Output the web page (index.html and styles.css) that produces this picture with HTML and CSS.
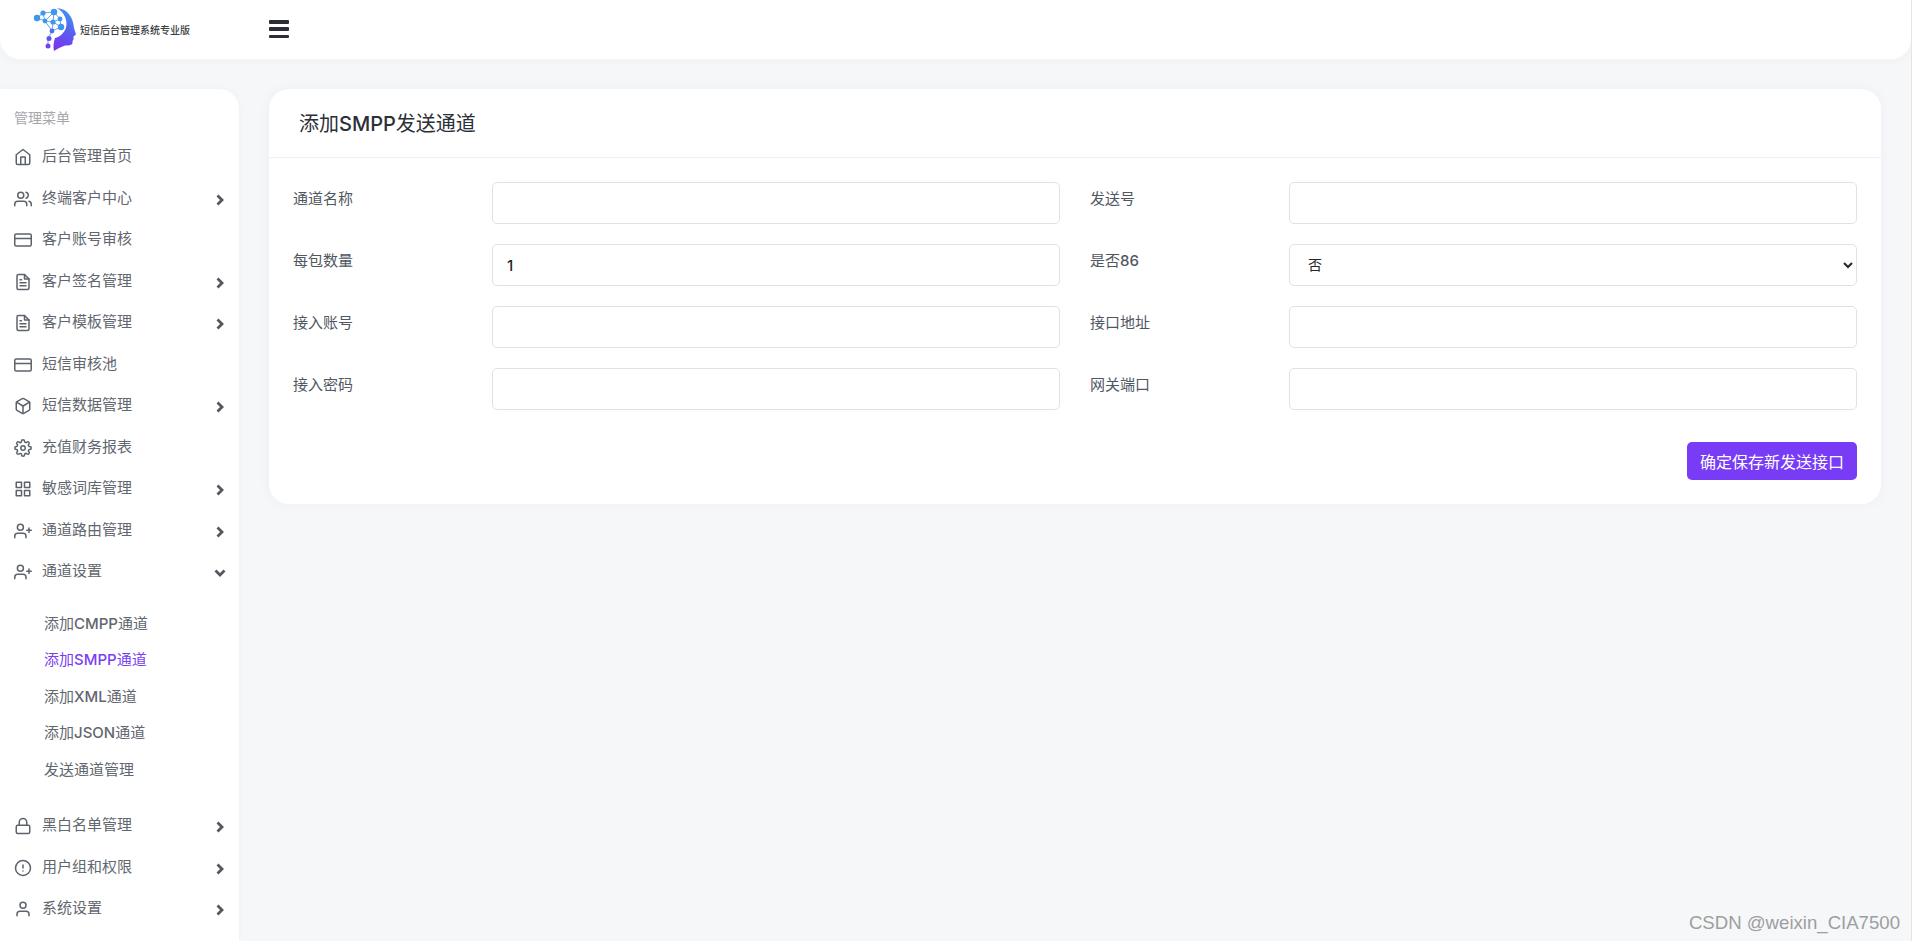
FILE: index.html
```html
<!DOCTYPE html>
<html lang="zh-CN">
<head>
    <meta charset="UTF-8">
    <meta name="viewport" content="width=device-width, initial-scale=1.0">
    <title>添加SMPP发送通道</title>
    <link rel="stylesheet" href="styles.css">
</head>
<body>
    <svg class="sprite" xmlns="http://www.w3.org/2000/svg">
        <symbol id="i-home" viewBox="0 0 24 24"><path d="M3 9l9-7 9 7v11a2 2 0 0 1-2 2H5a2 2 0 0 1-2-2z"/><polyline points="9 22 9 12 15 12 15 22"/></symbol>
        <symbol id="i-users" viewBox="0 0 24 24"><path d="M17 21v-2a4 4 0 0 0-4-4H5a4 4 0 0 0-4 4v2"/><circle cx="9" cy="7" r="4"/><path d="M23 21v-2a4 4 0 0 0-3-3.87"/><path d="M16 3.13a4 4 0 0 1 0 7.75"/></symbol>
        <symbol id="i-card" viewBox="0 0 24 24"><rect x="1" y="4" width="22" height="16" rx="2" ry="2"/><line x1="1" y1="10" x2="23" y2="10"/></symbol>
        <symbol id="i-file" viewBox="0 0 24 24"><path d="M14 2H6a2 2 0 0 0-2 2v16a2 2 0 0 0 2 2h12a2 2 0 0 0 2-2V8z"/><polyline points="14 2 14 8 20 8"/><line x1="16" y1="13" x2="8" y2="13"/><line x1="16" y1="17" x2="8" y2="17"/><polyline points="10 9 9 9 8 9"/></symbol>
        <symbol id="i-box" viewBox="0 0 24 24"><path d="M21 16V8a2 2 0 0 0-1-1.73l-7-4a2 2 0 0 0-2 0l-7 4A2 2 0 0 0 3 8v8a2 2 0 0 0 1 1.73l7 4a2 2 0 0 0 2 0l7-4A2 2 0 0 0 21 16z"/><polyline points="3.27 6.96 12 12.01 20.73 6.96"/><line x1="12" y1="22.08" x2="12" y2="12"/></symbol>
        <symbol id="i-gear" viewBox="0 0 24 24"><circle cx="12" cy="12" r="3"/><path d="M19.4 15a1.65 1.65 0 0 0 .33 1.82l.06.06a2 2 0 0 1 0 2.83 2 2 0 0 1-2.83 0l-.06-.06a1.65 1.65 0 0 0-1.82-.33 1.65 1.65 0 0 0-1 1.51V21a2 2 0 0 1-2 2 2 2 0 0 1-2-2v-.09A1.65 1.65 0 0 0 9 19.4a1.65 1.65 0 0 0-1.82.33l-.06.06a2 2 0 0 1-2.83 0 2 2 0 0 1 0-2.83l.06-.06a1.65 1.65 0 0 0 .33-1.82 1.65 1.65 0 0 0-1.51-1H3a2 2 0 0 1-2-2 2 2 0 0 1 2-2h.09A1.65 1.65 0 0 0 4.6 9a1.65 1.65 0 0 0-.33-1.82l-.06-.06a2 2 0 0 1 0-2.83 2 2 0 0 1 2.83 0l.06.06a1.65 1.65 0 0 0 1.82.33H9a1.65 1.65 0 0 0 1-1.51V3a2 2 0 0 1 2-2 2 2 0 0 1 2 2v.09a1.65 1.65 0 0 0 1 1.51 1.65 1.65 0 0 0 1.82-.33l.06-.06a2 2 0 0 1 2.83 0 2 2 0 0 1 0 2.83l-.06.06a1.65 1.65 0 0 0-.33 1.82V9a1.65 1.65 0 0 0 1.51 1H21a2 2 0 0 1 2 2 2 2 0 0 1-2 2h-.09a1.65 1.65 0 0 0-1.51 1z"/></symbol>
        <symbol id="i-grid" viewBox="0 0 24 24"><rect x="3" y="3" width="7" height="7"/><rect x="14" y="3" width="7" height="7"/><rect x="14" y="14" width="7" height="7"/><rect x="3" y="14" width="7" height="7"/></symbol>
        <symbol id="i-userplus" viewBox="0 0 24 24"><path d="M16 21v-2a4 4 0 0 0-4-4H5a4 4 0 0 0-4 4v2"/><circle cx="8.5" cy="7" r="4"/><line x1="20" y1="8" x2="20" y2="14"/><line x1="23" y1="11" x2="17" y2="11"/></symbol>
        <symbol id="i-lock" viewBox="0 0 24 24"><rect x="3" y="11" width="18" height="11" rx="2" ry="2"/><path d="M7 11V7a5 5 0 0 1 10 0v4"/></symbol>
        <symbol id="i-alert" viewBox="0 0 24 24"><circle cx="12" cy="12" r="10"/><line x1="12" y1="8" x2="12" y2="12"/><line x1="12" y1="16" x2="12.01" y2="16"/></symbol>
        <symbol id="i-user" viewBox="0 0 24 24"><path d="M20 21v-2a4 4 0 0 0-4-4H8a4 4 0 0 0-4 4v2"/><circle cx="12" cy="7" r="4"/></symbol>
        <symbol id="i-right" viewBox="0 0 10 12"><polyline points="2.500 1.500 7 6 2.500 10.500"/></symbol>
        <symbol id="i-down" viewBox="0 0 12 10"><polyline points="1.500 2.500 6 7 10.500 2.500"/></symbol>
    </svg>

    <div class="app">
        <div class="page">
            <header class="topbar">
                <div class="brand">
                    <svg class="brand-logo" viewBox="30 5 50 50" xmlns="http://www.w3.org/2000/svg">
                        <defs>
                            <linearGradient id="headFill" x1="0.6" y1="0" x2="0.3" y2="1">
                                <stop offset="0" stop-color="#3d9bf0"/>
                                <stop offset="0.5" stop-color="#5a5cf0"/>
                                <stop offset="1" stop-color="#7a34ee"/>
                            </linearGradient>
                        </defs>
                        <path fill="url(#headFill)" d="M57 8C67 9 73 16 74 28L76 34.500 73.500 36.500 73.500 39.500 72.500 41 72.500 43.500C71 45.500 68 45.500 65 45.500 61 47 57 49 54 51 53 47 53.500 42 55 38 60 37 64 33 66 28 68 20 64 12 57 8Z"/>
                        <g stroke="#6aa8ee" stroke-width="1" fill="none">
                            <polyline points="37 18 43 13 54 12 60 19 61 27 52 31 48 39 48 46"/>
                            <polyline points="37 18 45 21 53 22 61 27"/>
                            <polyline points="43 13 45 21 52 31 53 22 54 12 45 21"/>
                            <polyline points="53 22 60 19"/>
                        </g>
                        <g fill="#3f96ee">
                            <circle cx="37" cy="18" r="3.200"/>
                            <circle cx="43" cy="13" r="2.600"/>
                            <circle cx="54" cy="12" r="3.200"/>
                            <circle cx="45" cy="21" r="2.400"/>
                            <circle cx="53" cy="22" r="2.600"/>
                            <circle cx="60" cy="19" r="2.400"/>
                            <circle cx="61" cy="27" r="3.200"/>
                        </g>
                        <circle cx="52" cy="31" r="2.400" fill="#4f6fee"/>
                        <circle cx="49" cy="38.500" r="2.500" fill="#6450ee"/>
                        <circle cx="48" cy="46" r="2.500" fill="#7a40ee"/>
                    </svg>
                    <span class="brand-name">短信后台管理系统专业版</span>
                </div>
                <button class="menu-toggle" type="button" aria-label="菜单">
                    <span></span><span></span><span></span>
                </button>
            </header>

            <div class="main">
                <aside class="sidebar">
                    <div class="sidebar-title">管理菜单</div>
                    <ul class="nav">
                        <li class="nav-item"><svg class="nav-icon"><use href="#i-home"/></svg><span class="nav-text">后台管理首页</span></li>
                        <li class="nav-item"><svg class="nav-icon"><use href="#i-users"/></svg><span class="nav-text">终端客户中心</span><svg class="nav-arrow"><use href="#i-right"/></svg></li>
                        <li class="nav-item"><svg class="nav-icon"><use href="#i-card"/></svg><span class="nav-text">客户账号审核</span></li>
                        <li class="nav-item"><svg class="nav-icon"><use href="#i-file"/></svg><span class="nav-text">客户签名管理</span><svg class="nav-arrow"><use href="#i-right"/></svg></li>
                        <li class="nav-item"><svg class="nav-icon"><use href="#i-file"/></svg><span class="nav-text">客户模板管理</span><svg class="nav-arrow"><use href="#i-right"/></svg></li>
                        <li class="nav-item"><svg class="nav-icon"><use href="#i-card"/></svg><span class="nav-text">短信审核池</span></li>
                        <li class="nav-item"><svg class="nav-icon"><use href="#i-box"/></svg><span class="nav-text">短信数据管理</span><svg class="nav-arrow"><use href="#i-right"/></svg></li>
                        <li class="nav-item"><svg class="nav-icon"><use href="#i-gear"/></svg><span class="nav-text">充值财务报表</span></li>
                        <li class="nav-item"><svg class="nav-icon"><use href="#i-grid"/></svg><span class="nav-text">敏感词库管理</span><svg class="nav-arrow"><use href="#i-right"/></svg></li>
                        <li class="nav-item"><svg class="nav-icon"><use href="#i-userplus"/></svg><span class="nav-text">通道路由管理</span><svg class="nav-arrow"><use href="#i-right"/></svg></li>
                        <li class="nav-item"><svg class="nav-icon"><use href="#i-userplus"/></svg><span class="nav-text">通道设置</span><svg class="nav-arrow nav-arrow-open"><use href="#i-down"/></svg></li>
                    </ul>
                    <ul class="subnav">
                        <li>添加<span class="en">CMPP</span>通道</li>
                        <li class="active">添加<span class="en">SMPP</span>通道</li>
                        <li>添加<span class="en">XML</span>通道</li>
                        <li>添加<span class="en">JSON</span>通道</li>
                        <li>发送通道管理</li>
                    </ul>
                    <ul class="nav">
                        <li class="nav-item"><svg class="nav-icon"><use href="#i-lock"/></svg><span class="nav-text">黑白名单管理</span><svg class="nav-arrow"><use href="#i-right"/></svg></li>
                        <li class="nav-item"><svg class="nav-icon"><use href="#i-alert"/></svg><span class="nav-text">用户组和权限</span><svg class="nav-arrow"><use href="#i-right"/></svg></li>
                        <li class="nav-item"><svg class="nav-icon"><use href="#i-user"/></svg><span class="nav-text">系统设置</span><svg class="nav-arrow"><use href="#i-right"/></svg></li>
                    </ul>
                </aside>

                <section class="content">
                    <div class="card">
                        <h1 class="card-title">添加<span class="en">SMPP</span>发送通道</h1>
                        <form class="card-body">
                            <div class="form-grid">
                                <div class="form-row"><label>通道名称</label><input type="text"></div>
                                <div class="form-row"><label>发送号</label><input type="text"></div>
                                <div class="form-row"><label>每包数量</label><input type="text" value="1"></div>
                                <div class="form-row"><label>是否<span class="en">86</span></label>
                                    <select><option>否</option><option>是</option></select>
                                </div>
                                <div class="form-row"><label>接入账号</label><input type="text"></div>
                                <div class="form-row"><label>接口地址</label><input type="text"></div>
                                <div class="form-row"><label>接入密码</label><input type="text"></div>
                                <div class="form-row"><label>网关端口</label><input type="text"></div>
                            </div>
                            <div class="form-actions">
                                <button type="button" class="btn-save">确定保存新发送接口</button>
                            </div>
                        </form>
                    </div>
                </section>
            </div>
        </div>
        <div class="scroll-edge"></div>
    </div>
    <div class="watermark">CSDN @weixin_CIA7500</div>
</body>
</html>
```

FILE: styles.css
```css
* { box-sizing: border-box; }
html, body { height: 100%; }
body {
    margin: 0;
    overflow: hidden;
    background-color: #f6f7f9;
    color: #505762;
    font-family: Inter, "Noto Sans CJK SC", sans-serif;
    font-size: 15px;
}
.sprite { display: none; }
.en { font-weight: 500; }

.app { display: flex; height: 100%; }
.page { flex: 1; min-width: 0; display: flex; flex-direction: column; }
.scroll-edge { width: 4px; background-color: #fff; border-left: 1px solid #e4e5e7; }

/* top bar */
.topbar {
    height: 59px;
    display: flex;
    align-items: center;
    background-color: #fff;
    border-radius: 0 0 20px 20px;
    box-shadow: 0 2px 10px rgba(40,50,70,0.03);
}
.brand { width: 269px; display: flex; align-items: center; padding-left: 30px; }
.brand-logo { width: 50px; height: 50px; flex: none; }
.brand-name { font-size: 10px; font-weight: 500; color: #3a3d42; white-space: nowrap; }
.menu-toggle {
    width: 20px;
    height: 18px;
    margin-top: -1px;
    padding: 0;
    border: none;
    background: none;
    display: flex;
    flex-direction: column;
    justify-content: space-between;
}
.menu-toggle span { display: block; height: 3.5px; border-radius: 1px; background-color: #2b2e35; }

.main { flex: 1; min-height: 0; display: flex; gap: 30px; padding-top: 30px; }

/* sidebar */
.sidebar {
    width: 239px;
    flex: none;
    background-color: #fff;
    border-radius: 0 20px 0 0;
    box-shadow: 0 0 10px rgba(40,50,70,0.03);
    padding-top: 19px;
}
.sidebar-title { padding-left: 14px; height: 27.5px; line-height: 20px; font-size: 14px; color: #a5a7ab; }
.nav, .subnav { list-style: none; margin: 0; padding: 0; }
.nav-item { height: 41.5px; display: flex; align-items: center; padding-left: 14px; color: #62676f; }
.nav-icon {
    width: 18px;
    height: 18px;
    flex: none;
    margin-top: 2px;
    fill: none;
    stroke: #5d626b;
    stroke-width: 2;
    stroke-linecap: round;
    stroke-linejoin: round;
}
.nav-text { margin-left: 10px; flex: 1; line-height: 20px; }
.nav-arrow {
    width: 10px;
    height: 12px;
    flex: none;
    margin: 4px 14px 0 0;
    fill: none;
    stroke: #53585f;
    stroke-width: 2.8;
}
.nav-arrow-open { width: 12px; height: 10px; margin-right: 13px; }
.subnav { padding: 13.75px 0 16.25px 44px; }
.subnav li { height: 36.5px; line-height: 36.5px; color: #62676f; }
.subnav li.active { color: #7a3ff2; }

/* content card */
.content { flex: 1; min-width: 0; padding-right: 30px; }
.card {
    background-color: #fff;
    border-radius: 20px;
    box-shadow: 0 0 14px rgba(40,50,70,0.04);
}
.card-title {
    margin: 0;
    height: 69px;
    padding: 0 30px;
    line-height: 71px;
    font-size: 20px;
    font-weight: 400;
    color: #2c3038;
    border-bottom: 1px solid #eff0f2;
}
.card-body { padding: 24px; }
.form-grid { display: grid; grid-template-columns: 1fr 1fr; gap: 20px 30px; }
.form-row { display: grid; grid-template-columns: 199px 1fr; }
.form-row label { padding-top: 6px; line-height: 22px; color: #505762; }
.form-row input, .form-row select {
    width: 100%;
    height: 42px;
    border: 1px solid #e1e2e4;
    border-radius: 5px;
    background-color: #fff;
    color: #22252a;
    font-family: inherit;
}
.form-row input { padding: 0 14px; font-size: 15px; font-weight: 500; }
.form-row select { padding: 0 14px 2px; font-size: 14px; }
.form-actions { display: flex; justify-content: flex-end; margin-top: 32px; }
.btn-save {
    width: 170px;
    height: 38px;
    padding: 0;
    border: none;
    border-radius: 5px;
    background-color: #783cf6;
    color: #fff;
    font-family: inherit;
    font-size: 16px;
}

.watermark {
    position: absolute;
    right: 15px;
    bottom: 7px;
    font-family: "Liberation Sans", sans-serif;
    font-size: 18.6px;
    color: #9d9ea0;
}
```
